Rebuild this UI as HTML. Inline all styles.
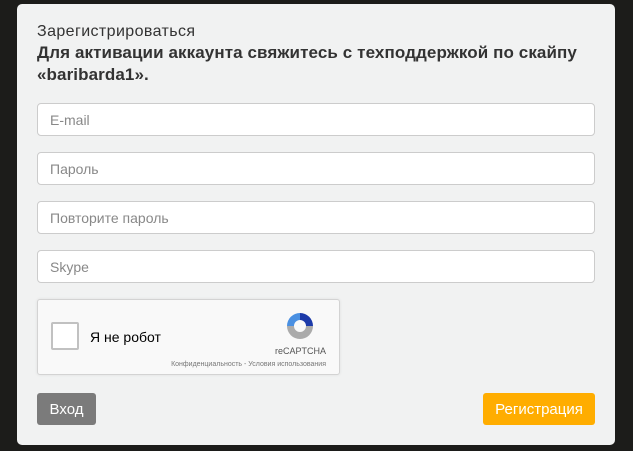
<!DOCTYPE html>
<html><head><meta charset="utf-8"><style>
*{box-sizing:border-box;margin:0;padding:0}
body{width:633px;height:451px;overflow:hidden;background:#1c1c1a;font-family:"Liberation Sans","DejaVu Sans",sans-serif;position:relative}
.m{position:absolute;left:17px;top:4px;width:598px;height:441px;background:#f1f2f2;border-radius:5px}
.t{position:absolute;left:20px;top:19px;font-size:16px;color:#333;letter-spacing:0.4px}
.b{position:absolute;left:20px;top:38px;width:565px;font-size:17px;font-weight:bold;color:#333;line-height:22px;letter-spacing:0.1px}
.i{position:absolute;left:20px;width:558px;height:33px;background:#fff;border:1px solid #ccc;border-radius:4px;font-size:14px;color:#888;padding:8px 12px}
.c{position:absolute;left:20px;top:295px;width:303px;height:76px;background:#f9f9f9;border:1px solid #d3d3d3;border-radius:3px;box-shadow:0 0 3px rgba(0,0,0,.08)}
.cb{position:absolute;left:13px;top:22px;width:28px;height:28px;background:#fff;border:2px solid #c1c1c1;border-radius:2px}
.btn{position:absolute;top:389px;height:32px;border-radius:3px;color:#fff;font-size:15px;padding:8px 0;text-align:center}
</style></head><body>
<div class="m">
<div class="t">Зарегистрироваться</div>
<div class="b">Для активации аккаунта свяжитесь с техподдержкой по скайпу «baribarda1».</div>
<div class="i" style="top:99px">E-mail</div>
<div class="i" style="top:148px">Пароль</div>
<div class="i" style="top:197px">Повторите пароль</div>
<div class="i" style="top:246px">Skype</div>
<div class="c"><div class="cb"></div>
<div style="position:absolute;left:52px;top:29px;font-size:14px;color:#000">Я не робот</div>
<svg style="position:absolute;left:245px;top:10px" width="34" height="34" viewBox="0 0 34 34"><path d="M4 16 A13 13 0 0 1 17 3 L17 10 A6 6 0 0 0 11 16Z" fill="#4a90e2"/><path d="M17 3 A13 13 0 0 1 30 16 L23 16 A6 6 0 0 0 17 10Z" fill="#1c3aa9"/><path d="M30 16 A13 13 0 0 1 4 16 L11 16 A6 6 0 0 0 23 16Z" fill="#ababab"/></svg>
<div style="position:absolute;right:13px;top:46px;font-size:9px;color:#555">reCAPTCHA</div>
<div style="position:absolute;right:13px;top:61px;font-size:7px;color:#777">Конфиденциальность - Условия использования</div>
</div>
<div class="btn" style="left:20px;width:59px;background:#7b7b7b">Вход</div>
<div class="btn" style="left:466px;width:112px;background:#ffad00">Регистрация</div>
</div>
</body></html>
